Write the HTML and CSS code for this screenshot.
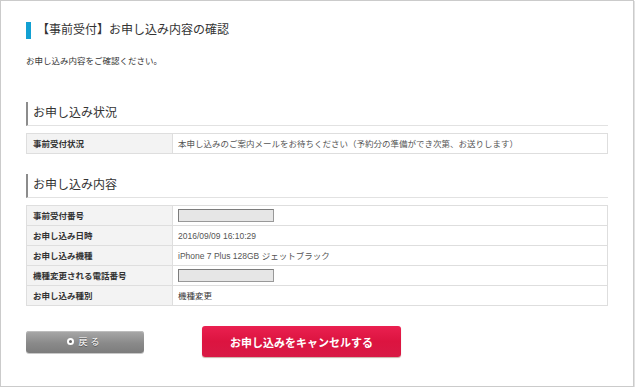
FILE: index.html
```html
<!DOCTYPE html>
<html lang="ja">
<head>
    <meta charset="UTF-8">
    <title>お申し込み内容の確認</title>
    <link rel="stylesheet" href="styles.css">
</head>
<body>
    <div class="page">
        <h1 class="page-title">【事前受付】お申し込み内容の確認</h1>
        <p class="lead">お申し込み内容をご確認ください。</p>

        <!-- お申し込み状況 -->
        <h2 class="section-title">お申し込み状況</h2>
        <table class="info">
            <tr>
                <th>事前受付状況</th>
                <td>本申し込みのご案内メールをお待ちください（予約分の準備ができ次第、お送りします）</td>
            </tr>
        </table>

        <!-- お申し込み内容 -->
        <h2 class="section-title">お申し込み内容</h2>
        <table class="info">
            <tr>
                <th>事前受付番号</th>
                <td><span class="masked"></span></td>
            </tr>
            <tr>
                <th>お申し込み日時</th>
                <td>2016/09/09 16:10:29</td>
            </tr>
            <tr>
                <th>お申し込み機種</th>
                <td>iPhone 7 Plus 128GB ジェットブラック</td>
            </tr>
            <tr>
                <th>機種変更される電話番号</th>
                <td><span class="masked"></span></td>
            </tr>
            <tr>
                <th>お申し込み種別</th>
                <td class="dark">機種変更</td>
            </tr>
        </table>

        <div class="actions">
            <a href="#" class="btn-back"><span class="dot"></span>戻る</a>
            <a href="#" class="btn-cancel">お申し込みをキャンセルする</a>
        </div>
    </div>
</body>
</html>
```

FILE: styles.css
```css
body {
    margin: 0;
    background-color: #fff;
    font-family: "Liberation Sans", "Noto Sans CJK JP", sans-serif;
    color: #333;
}

.page {
    width: 634px;
    height: 387px;
    box-sizing: border-box;
    border: 1px solid #cbcbcb;
    box-shadow: 1px 1px 0 #e2e2e2;
    padding: 21px 25px 0 25px;
}

.page-title {
    margin: 0;
    height: 17px;
    line-height: 17px;
    border-left: 5px solid #12a0d2;
    padding-left: 6px;
    font-size: 12px;
    font-weight: normal;
    color: #333;
}

.lead {
    margin: 16px 0 0 0;
    font-size: 8.5px;
    line-height: 12px;
    color: #333;
}

.section-title {
    margin: 35px 0 0 0;
    height: 23px;
    line-height: 23px;
    border-left: 2px solid #8c8c8c;
    border-bottom: 1px solid #e2e2e2;
    padding-left: 5px;
    font-size: 12px;
    font-weight: normal;
    color: #333;
}

.section-title + .info {
    margin-top: 7px;
}

.info + .section-title {
    margin-top: 20px;
}

.info {
    width: 582px;
    border-collapse: collapse;
    font-size: 8.5px;
}

.info th,
.info td {
    height: 19px;
    padding: 0 5px 0 6px;
    border: 1px solid #dedede;
    text-align: left;
    vertical-align: middle;
    line-height: 12px;
}

.info td {
    padding-left: 5px;
    color: #555;
}

.info th {
    width: 134px;
    background-color: #f3f3f3;
    font-weight: bold;
    color: #333;
}

.info td.dark {
    color: #333;
}

.masked {
    display: block;
    width: 94px;
    height: 11px;
    background-color: #e6e6e6;
    border: 1px solid #7c7c7c;
    border-right-color: #999;
    border-bottom-color: #999;
}

.actions {
    display: flex;
    align-items: center;
    gap: 58px;
    margin-top: 20px;
}

.btn-back {
    display: flex;
    justify-content: center;
    align-items: center;
    gap: 4px;
    width: 118px;
    height: 22px;
    box-sizing: border-box;
    border-radius: 3px;
    background: linear-gradient(#a8a8a8, #8a8a8a 55%, #7c7c7c);
    box-shadow: 0 1px 0 #c8c8c8, inset 0 1px 0 #bdbdbd;
    color: #fff;
    font-size: 9px;
    text-decoration: none;
    text-shadow: 0 1px 0 #555;
    letter-spacing: 3px;
}

.dot {
    width: 3px;
    height: 3px;
    border-radius: 50%;
    background-color: #666;
    border: 2px solid #fff;
}

.btn-cancel {
    display: flex;
    justify-content: center;
    align-items: center;
    width: 199px;
    height: 31px;
    box-sizing: border-box;
    border-radius: 3px;
    background: linear-gradient(#ea2050, #dc1440 50%, #d81a45);
    box-shadow: 0 1px 1px #c9b3a8;
    color: #fff;
    font-size: 11px;
    font-weight: bold;
    text-decoration: none;
}
```
